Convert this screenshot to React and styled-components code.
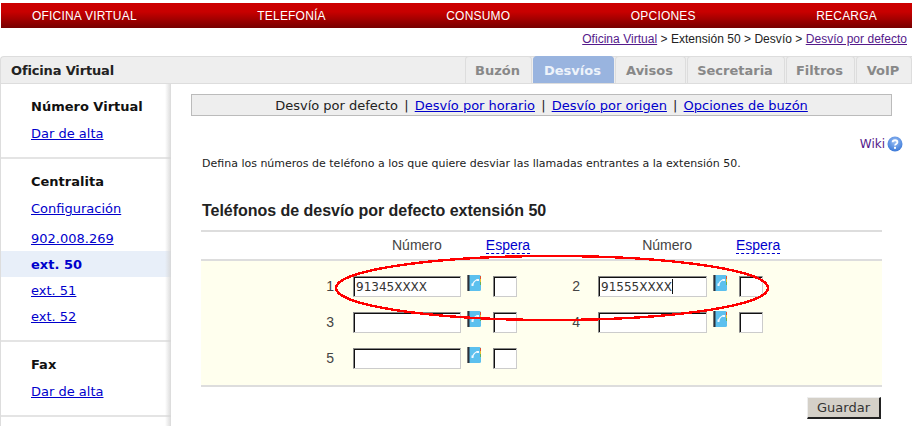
import React from "react";
import styled, { createGlobalStyle } from "styled-components";

const Global = createGlobalStyle`
  html, body { margin: 0; padding: 0; background: #fff; overflow: hidden; }
  body { font-family: "DejaVu Sans", sans-serif; width: 912px; height: 426px; }
  * { box-sizing: border-box; }
`;

const Page = styled.div`width: 912px; height: 426px; overflow: hidden; padding-top: 3px;`;

const Nav = styled.nav`
  height: 25px; margin-left: 1px;
  background: linear-gradient(#cc0000 0%, #c80000 35%, #770000 100%);
  display: flex; justify-content: space-between; align-items: center;
  padding: 0 35px 0 31px;
  font: 12px "Liberation Sans", sans-serif; color: #fff; letter-spacing: 0.2px;
`;

const Crumbs = styled.div`
  height: 28px; padding: 3px 5px 0 0; text-align: right;
  font: 12px/16px "Liberation Sans", sans-serif; color: #222; letter-spacing: 0.03px;
  a { color: #551a8b; text-decoration: underline; }
`;

const Head = styled.div`
  height: 28px; display: flex; align-items: stretch; justify-content: space-between;
  background: #eee; border: 1px solid #ddd; border-width: 1px 0 1px 1px; border-top-left-radius: 4px;
`;
const HeadTitle = styled.div`font-size: 13px; font-weight: bold; color: #222; padding-left: 10px; line-height: 27px; letter-spacing: -0.15px;`;
const Tabs = styled.div`display: flex; gap: 1px; margin-top: -1px;`;
const Tab = styled.div`
  width: ${p => p.$w}px; font-size: 13px; font-weight: bold; text-align: center; line-height: 27px; height: 27px;
  padding-right: 2px;
  color: ${p => p.$active ? "#eef3fa" : "#888"};
  background: ${p => p.$active ? "#99b4df" : "#eee"};
  border: 1px solid ${p => p.$active ? "#99b4df" : "#ddd"}; border-bottom: 0; border-radius: 4px 4px 0 0;
`;

const Body = styled.div`display: flex; height: 343px;`;

const Side = styled.aside`
  width: 171px; flex: none; position: relative; border-left: 1px solid #ddd;
  &::after { content: ""; position: absolute; top: 0; bottom: 0; right: 0; width: 6px;
    background: linear-gradient(to right, rgba(221,221,221,0), rgba(214,214,214,.9)); }
`;
const Section = styled.section`
  border-bottom: 2px solid #e4e4e4; height: ${p => p.$h}px; padding-top: 14px;
`;
const SideTitle = styled.div`font-size: 13px; font-weight: bold; color: #111; padding-left: 30px; line-height: 18px; height: 27px;`;
const SideLink = styled.a`
  display: block; padding: ${p => p.$pt || 0}px 0 0 30px; font-size: 13px; height: ${p => p.$h || 26}px; line-height: 18px;
  color: #0000cc; text-decoration: underline; margin-bottom: ${p => p.$mb || 0}px;
`;
const SideCurrent = styled.div`
  padding: 1px 0 0 30px; font-size: 13px; font-weight: bold; color: #0000cc; background: #e8eff9;
  height: 26px; line-height: 25px;
`;

const Main = styled.main`flex: 1; padding: 10px 20px 0 20px; min-width: 0;`;
const SubTabs = styled.div`
  height: 22px; background: #eee; border: 1px solid #bbb; text-align: center; font-size: 13px; line-height: 20px; color: #222;
  width: 701px; padding-top: 1px;
  a { color: #0000cc; text-decoration: underline; }
`;
const Sep = styled.span`padding: 0 2px;`;
const WikiRow = styled.div`
  display: flex; justify-content: flex-end; align-items: center; gap: 2px; height: 20px; margin-top: 18px;
  width: 712px; font-size: 12px; color: #551a8b;
`;
const Desc = styled.p`margin: 3px 0 0 11px; font-size: 11px; line-height: 14px; color: #222; white-space: nowrap;`;
const H2 = styled.h2`
  margin: 30px 0 0 11px; font: bold 16px/20px "Liberation Sans", sans-serif; color: #222; height: 21px; letter-spacing: -0.03px;
`;
const Table = styled.div`margin: 8px 0 0 10px; width: 681px; position: relative;`;
const ColHeads = styled.div`
  border-top: 2px solid #ddd; border-bottom: 2px solid #ddd; height: 31px;
  display: flex;
  font: 14px/26px "Liberation Sans", sans-serif; color: #444;
`;
const NumHead = styled.div`margin-left: ${p => p.$ml}px;`;
const Wait = styled.span`
  margin-left: 44px; color: #0000cc; line-height: 15px; height: 16px; margin-top: 6px;
  border-bottom: 1px dashed #0000cc; white-space: nowrap;
`;
const Band = styled.div`
  background: #ffffee; border-bottom: 2px solid #ddd; height: 126px; padding-top: 15px;
  display: grid; grid-template-columns: 152px 108px 20px 34px 83px 109px 20px 30px; grid-auto-rows: 36px;
`;
const Num = styled.div`
  font: 14px/21px "Liberation Sans", sans-serif; color: #444; text-align: right; padding-right: ${p => p.$pr}px; height: 21px;
`;
const FieldBox = styled.div`
  height: 21px; background: #fff; border-style: solid; border-width: 1px;
  border-color: #888 #ccc #ccc #888; box-shadow: inset 1px 1px 0 #111;
  font-size: 12px; line-height: 20px; color: #333; padding-left: 2px; white-space: nowrap;
  width: ${p => p.$w}px; ${p => p.$m ? `margin-left:${p.$m}px;` : ""}
`;
const Caret = styled.span`display: inline-block; width: 1px; height: 15px; background: #111; vertical-align: -3px;`;
const BookCell = styled.div`padding-left: 6px; margin-top: -1px;`;
const BookIcon = styled.svg`display: block;`;
const Oval = styled.svg`position: absolute; left: 130px; top: 20px; pointer-events: none;`;
const Actions = styled.div`display: flex; justify-content: flex-end; padding: 10px 1px 0 0;`;
const Save = styled.button`
  width: 74px; height: 22px; background: #d4d0c8; color: #333; padding: 0; font: 13px "DejaVu Sans", sans-serif;
  border-style: solid; border-width: 1px 2px 2px 1px; border-color: #eee #222 #222 #eee;
`;

const Book = () => (
  <BookIcon width="14" height="16" viewBox="0 0 14 16">
    <rect x="0" y="0" width="14" height="16" rx="1.5" fill="#5cc0ee" />
    <rect x="0" y="0" width="1" height="16" fill="#777" />
    <rect x="1" y="0" width="1.5" height="16" fill="#2a3038" />
    <rect x="13" y="1" width="1" height="3" fill="#e05030" />
    <rect x="13" y="4" width="1" height="3" fill="#e8c030" />
    <rect x="13" y="7" width="1" height="3" fill="#60b060" />
    <path d="M5.5 10 Q6.5 6 10.5 4.5" stroke="#f2f8ff" strokeWidth="1.2" fill="none" />
    <rect x="4.5" y="8.5" width="2" height="2.5" fill="#f2f8ff" />
    <rect x="9.5" y="4" width="2.5" height="2" fill="#f2f8ff" />
  </BookIcon>
);

const Help = () => (
  <svg width="16" height="16" viewBox="0 0 16 16">
    <defs>
      <radialGradient id="h" cx="50%" cy="35%" r="65%">
        <stop offset="0" stopColor="#9cc0f4" />
        <stop offset="1" stopColor="#3a78d8" />
      </radialGradient>
    </defs>
    <circle cx="8" cy="8" r="7.5" fill="url(#h)" />
    <path d="M5.6 6.2 C5.8 3.6 10.4 3.6 10.4 6.2 C10.4 8 8 7.8 8 9.6" stroke="#fff" strokeWidth="1.8" fill="none" />
    <rect x="7" y="10.8" width="2" height="2" fill="#fff" />
  </svg>
);

export default function App() {
  return (
    <Page>
      <Global />
      <Nav>
        <span>OFICINA VIRTUAL</span><span>TELEFONÍA</span><span>CONSUMO</span><span>OPCIONES</span><span>RECARGA</span>
      </Nav>
      <Crumbs>
        <a>Oficina Virtual</a> &gt; Extensión 50 &gt; Desvío &gt; <a>Desvío por defecto</a>
      </Crumbs>
      <Head>
        <HeadTitle>Oficina Virtual</HeadTitle>
        <Tabs>
          <Tab $w={67}>Buzón</Tab>
          <Tab $w={81} $active>Desvíos</Tab>
          <Tab $w={71}>Avisos</Tab>
          <Tab $w={98}>Secretaria</Tab>
          <Tab $w={69}>Filtros</Tab>
          <Tab $w={56}>VoIP</Tab>
        </Tabs>
      </Head>
      <Body>
        <Side>
          <Section $h={75}>
            <SideTitle>Número Virtual</SideTitle>
            <SideLink>Dar de alta</SideLink>
          </Section>
          <Section $h={183}>
            <SideTitle>Centralita</SideTitle>
            <SideLink $mb={4}>Configuración</SideLink>
            <SideLink $h={21}>902.008.269</SideLink>
            <SideCurrent>ext. 50</SideCurrent>
            <SideLink $pt={5}>ext. 51</SideLink>
            <SideLink $pt={5}>ext. 52</SideLink>
          </Section>
          <Section $h={75}>
            <SideTitle>Fax</SideTitle>
            <SideLink>Dar de alta</SideLink>
          </Section>
        </Side>
        <Main>
          <SubTabs>
            Desvío por defecto <Sep>|</Sep> <a>Desvío por horario</a> <Sep>|</Sep> <a>Desvío por origen</a> <Sep>|</Sep> <a>Opciones de buzón</a>
          </SubTabs>
          <WikiRow>Wiki <Help /></WikiRow>
          <Desc>Defina los números de teléfono a los que quiere desviar las llamadas entrantes a la extensión 50.</Desc>
          <H2>Teléfonos de desvío por defecto extensión 50</H2>
          <Table>
            <ColHeads>
              <NumHead $ml={191}>Número</NumHead>
              <Wait>Espera</Wait>
              <NumHead $ml={112}>Número</NumHead>
              <Wait>Espera</Wait>
            </ColHeads>
            <Band>
              <Num $pr={19}>1</Num><FieldBox $w={108}>91345XXXX</FieldBox><BookCell><Book /></BookCell><FieldBox $w={24} $m={12} />
              <Num $pr={18}>2</Num><FieldBox $w={109}>91555XXXX<Caret /></FieldBox><BookCell><Book /></BookCell><FieldBox $w={24} $m={12} />
              <Num $pr={19}>3</Num><FieldBox $w={108} /><BookCell><Book /></BookCell><FieldBox $w={24} $m={12} />
              <Num $pr={18}>4</Num><FieldBox $w={109} /><BookCell><Book /></BookCell><FieldBox $w={24} $m={12} />
              <Num $pr={19}>5</Num><FieldBox $w={108} /><BookCell><Book /></BookCell><FieldBox $w={24} $m={12} />
            </Band>
            <Oval width="440" height="76" viewBox="0 0 440 76">
              <ellipse cx="221" cy="38" rx="216" ry="32" fill="none" stroke="#f00" strokeWidth="2.4" shapeRendering="crispEdges" />
            </Oval>
            <Actions><Save>Guardar</Save></Actions>
          </Table>
        </Main>
      </Body>
    </Page>
  );
}
